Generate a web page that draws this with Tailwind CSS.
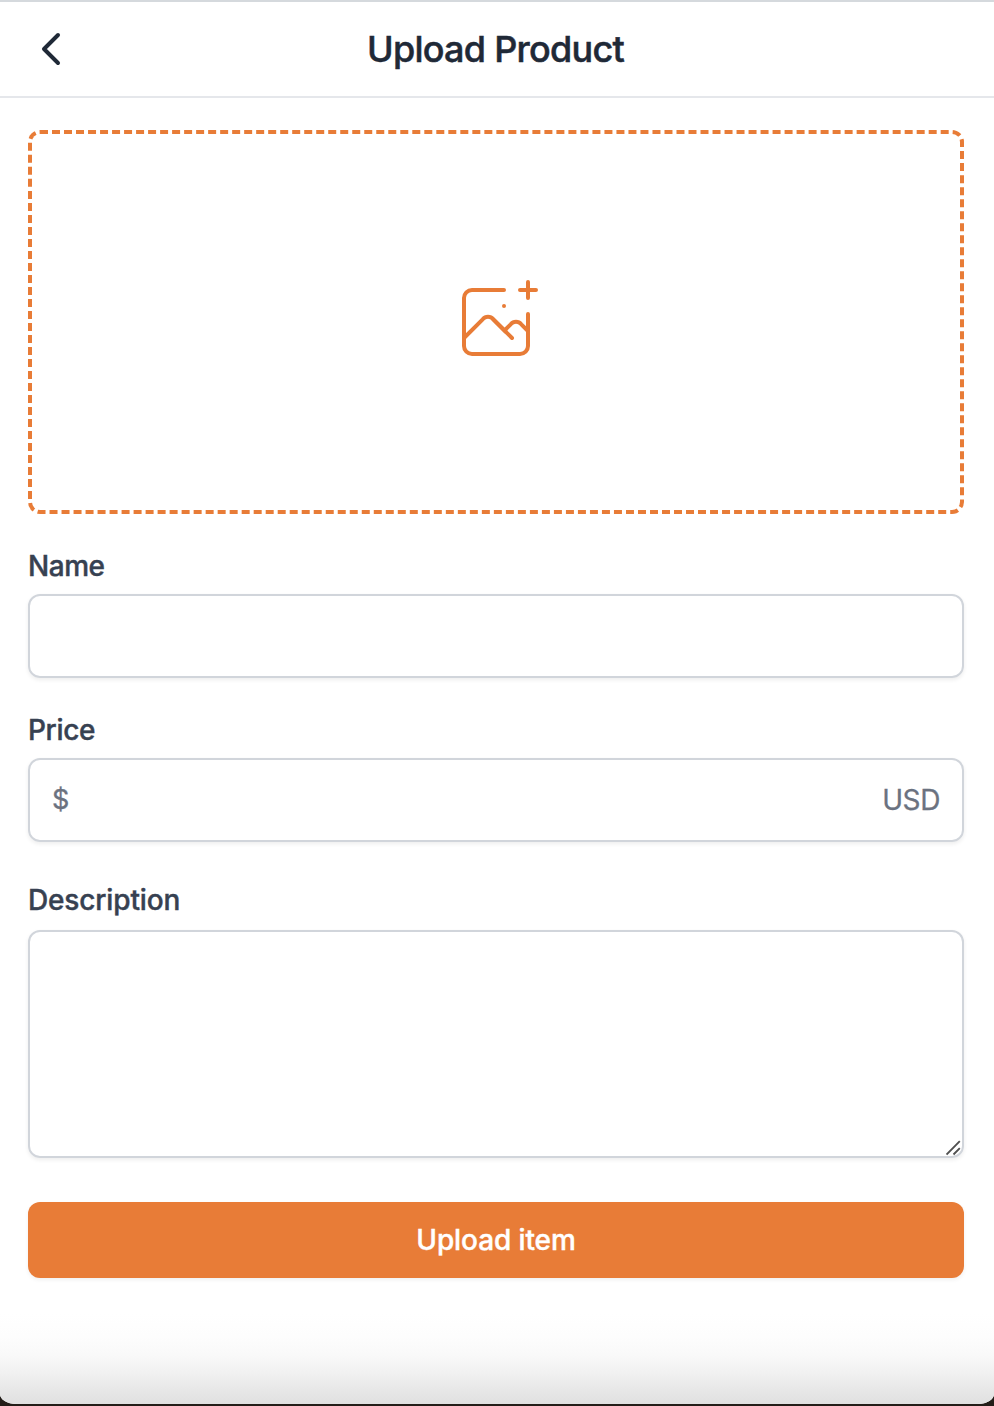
<!DOCTYPE html>
<html lang="en">
<head>
<meta charset="utf-8">
<title>Upload Product</title>
<script src="https://cdn.jsdelivr.net/npm/@tailwindcss/browser@4"></script>
</head>
<body class="bg-[#231d18] font-['Inter',sans-serif]">
<div class="flex h-[1404px] w-[994px] flex-col overflow-hidden rounded-b-[16px_10px] bg-white">
  <header class="grid h-[98px] shrink-0 grid-cols-[1fr_auto_1fr] items-center border-y-2 border-t-[#d5d9dd] border-b-[#e5e7eb] pr-[3px] text-[#1f2937]">
    <a href="#" aria-label="Back" class="pl-[41px]">
      <svg class="h-9 w-6" viewBox="0 0 24 36" fill="none" stroke="currentColor" stroke-width="4" stroke-linecap="round" stroke-linejoin="round"><path d="M17 4 3 18l14 14"/></svg>
    </a>
    <h1 class="text-[36px] leading-[56px] font-medium tracking-[-0.75px] [-webkit-text-stroke:0.5px]">Upload Product</h1>
    <span></span>
  </header>
  <form class="flex grow flex-col pt-8 pr-[30px] pl-7 text-[28px] leading-10">
    <label class="flex h-[384px] items-center justify-center rounded-xl border-4 border-dashed border-[#e87c37] text-[#e87c37]">
      <svg class="mt-[2px] h-24 w-24" viewBox="0 0 96 96" fill="none" stroke="currentColor" stroke-width="4" stroke-linecap="round" stroke-linejoin="round">
        <path d="M56 15H24a8 8 0 0 0-8 8v48a8 8 0 0 0 8 8h48a8 8 0 0 0 8-8V39"/>
        <path d="M80 7v16M72 15h16M56 31h.01"/>
        <path stroke-linecap="butt" d="M16 63 34.700 44.300a7 7 0 0 1 10.600 0L58 57"/>
        <path d="m45.300 44.300 18.700 18.700"/>
        <path stroke-linecap="butt" d="m57 55 5.700-5.700a7 7 0 0 1 10.600 0L80 56"/>
      </svg>
    </label>
    <label class="mt-8 font-medium tracking-[-0.45px] text-[#374151] [-webkit-text-stroke:0.4px]">Name</label>
    <div class="mt-2 h-[84px] rounded-xl border-2 border-[#d1d5db] shadow-[0_2px_4px_rgba(0,0,0,0.07)]"></div>
    <label class="mt-8 font-medium tracking-[-0.35px] text-[#374151] [-webkit-text-stroke:0.4px]">Price</label>
    <div class="mt-2 flex h-[84px] items-center justify-between rounded-xl border-2 border-[#d1d5db] px-[22px] text-[#6b7280] shadow-[0_2px_4px_rgba(0,0,0,0.07)]"><span class="text-[27px] [-webkit-text-stroke:0.3px]">$</span><span class="tracking-[-0.4px] [-webkit-text-stroke:0.3px]">USD</span></div>
    <label class="mt-[38px] font-medium tracking-[-0.15px] text-[#374151] [-webkit-text-stroke:0.4px]">Description</label>
    <div class="mt-[10px] flex h-[228px] items-end justify-end rounded-xl border-2 border-[#d1d5db] shadow-[0_2px_4px_rgba(0,0,0,0.07)]">
      <svg class="h-4 w-4" viewBox="0 0 16 16" fill="none" stroke="#505050" stroke-width="1.900"><path d="M0.500 14.500 13.800 1.200M7.500 14.500l6.300-6.300"/></svg>
    </div>
    <button type="button" class="mt-11 h-[76px] rounded-xl bg-[#e87c37] font-medium tracking-[-0.1px] text-white shadow-[0_2px_4px_rgba(0,0,0,0.06)] [-webkit-text-stroke:0.4px]">Upload item</button>
  </form>
  <div class="h-[90px] shrink-0 bg-[linear-gradient(to_bottom,#ffffff_0%,#fdfdfd_25%,#f9f9f9_45%,#f1f1f1_65%,#e7e7e7_85%,#e0e0e0_100%)]"></div>
</div>
</body>
</html>
